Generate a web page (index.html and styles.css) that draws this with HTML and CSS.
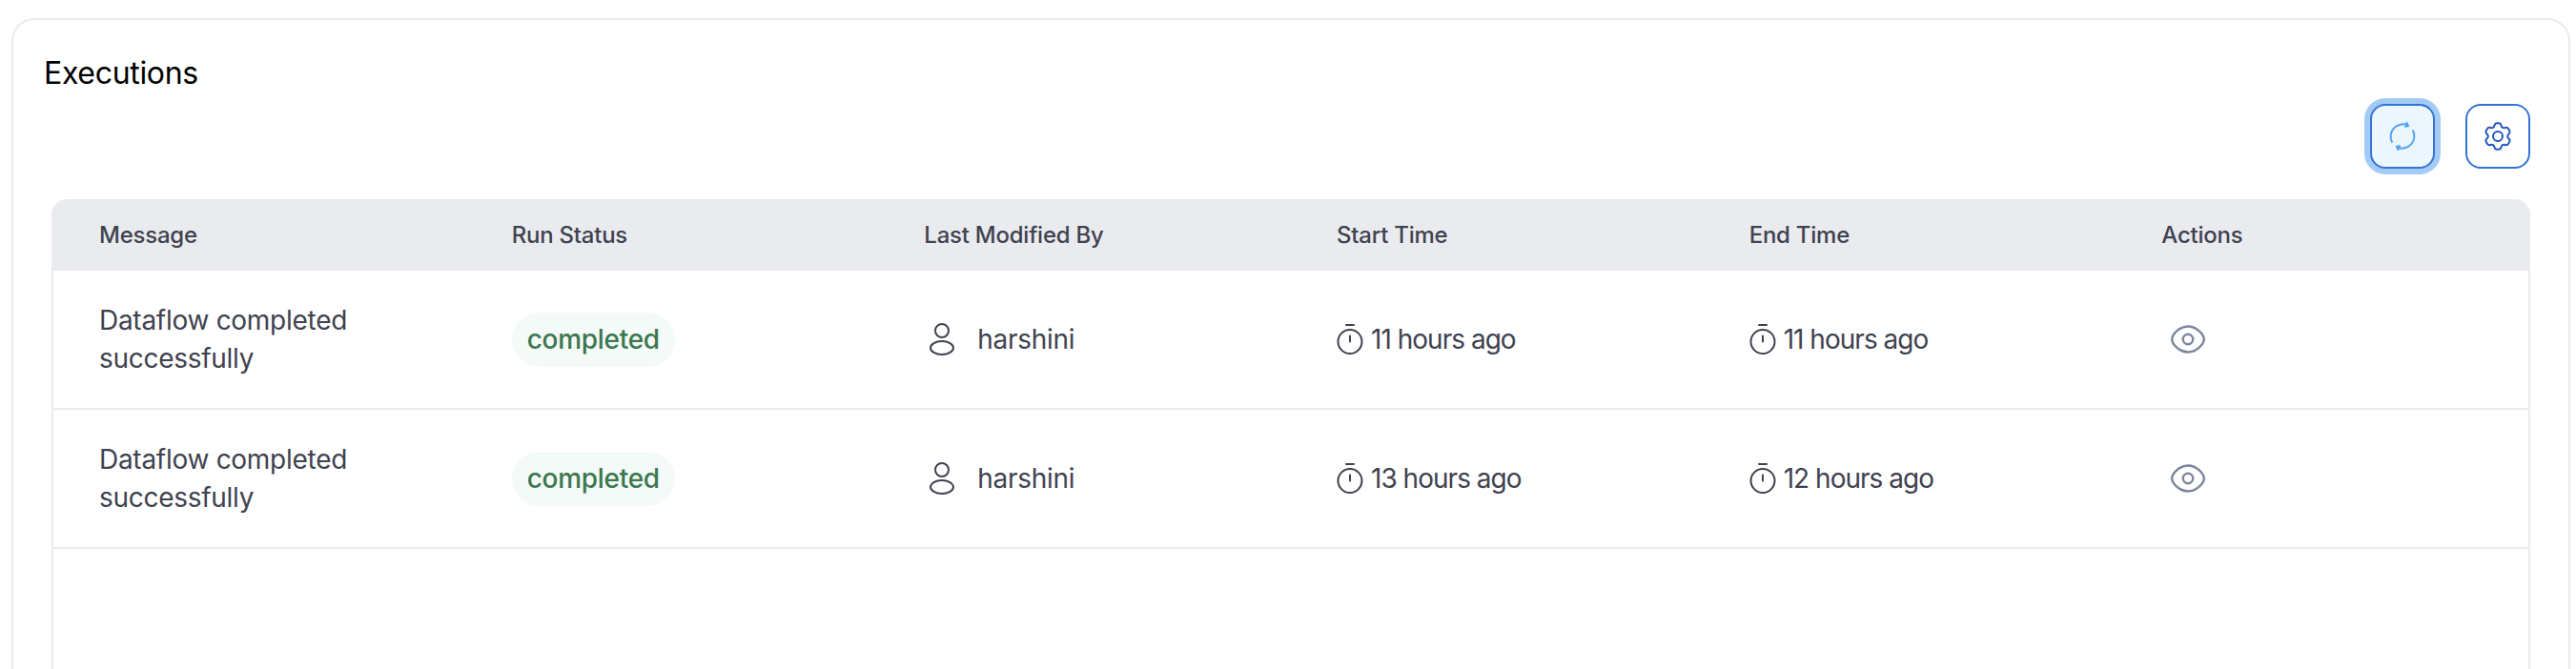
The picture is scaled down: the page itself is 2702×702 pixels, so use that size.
FILE: index.html
```html
<!DOCTYPE html>
<html lang="en">
<head>
<meta charset="utf-8">
<title>Executions</title>
<link rel="stylesheet" href="styles.css">
</head>
<body>
<svg class="sprite" aria-hidden="true">
  <symbol id="user" viewBox="0 0 28 36"><circle cx="14" cy="9" r="7"/><ellipse cx="14" cy="27" rx="12" ry="7"/></symbol>
  <symbol id="timer" viewBox="0 0 28 34"><circle cx="14" cy="19.5" r="12.5"/><path d="M10 2h8M14 13.5v6" stroke-linecap="round"/></symbol>
  <symbol id="eye" viewBox="0 0 36 30"><path d="M1.2 15C1.2 10 9 1.5 18 1.500S34.800 10 34.800 15 27 28.500 18 28.500 1.200 20 1.200 15Z"/><circle cx="18" cy="15" r="5.200"/></symbol>
</svg>
<main class="card">
  <h1 class="title">Executions</h1>
  <div class="toolbar">
    <button class="btn btn-active" aria-label="Refresh">
      <svg class="icon-btn" viewBox="0 0 32 32"><path d="M5.300 22.600A12.800 12.800 0 0 1 21.600 4.500M20.200 1.200L22 5L18.200 6.100M26.700 9.400A12.800 12.800 0 0 1 10.400 27.500M11.800 30.800L10 27L13.800 25.900"/></svg>
    </button>
    <button class="btn" aria-label="Settings">
      <svg class="icon-btn" viewBox="0 0 32 32"><circle cx="16" cy="16" r="5"/><path d="M12.500 4.500Q13 2.300 15 2.300H17Q19 2.300 19.500 4.500C20 7 21.400 7.800 23.800 7Q26 6.300 27 8L28.300 10.200Q29.200 12 27.600 13.400C25.700 15.100 25.700 16.900 27.600 18.600Q29.200 20 28.300 21.800L27 24Q26 25.700 23.800 25C21.400 24.200 20 25 19.500 27.500Q19 29.700 17 29.700H15Q13 29.700 12.500 27.500C12 25 10.600 24.200 8.200 25Q6 25.700 5 24L3.700 21.800Q2.800 20 4.400 18.600C6.300 16.900 6.300 15.100 4.400 13.400Q2.800 12 3.700 10.200L5 8Q6 6.300 8.200 7C10.600 7.800 12 7 12.500 4.500Z"/></svg>
    </button>
  </div>
  <section class="table">
    <div class="row head">
      <div>Message</div><div>Run Status</div><div>Last Modified By</div><div>Start Time</div><div>End Time</div><div>Actions</div>
    </div>
    <div class="row">
      <div>Dataflow completed<br>successfully</div>
      <div><span class="badge">completed</span></div>
      <div class="user"><svg class="icon-user"><use href="#user"/></svg>harshini</div>
      <div class="time"><svg class="icon-timer"><use href="#timer"/></svg>11 hours ago</div>
      <div class="time"><svg class="icon-timer"><use href="#timer"/></svg>11 hours ago</div>
      <div class="actions"><svg class="icon-eye"><use href="#eye"/></svg></div>
    </div>
    <div class="row">
      <div>Dataflow completed<br>successfully</div>
      <div><span class="badge">completed</span></div>
      <div class="user"><svg class="icon-user"><use href="#user"/></svg>harshini</div>
      <div class="time"><svg class="icon-timer"><use href="#timer"/></svg>13 hours ago</div>
      <div class="time"><svg class="icon-timer"><use href="#timer"/></svg>12 hours ago</div>
      <div class="actions"><svg class="icon-eye"><use href="#eye"/></svg></div>
    </div>
  </section>
</main>
</body>
</html>
```
FILE: styles.css
```css
* { box-sizing: border-box; }
body {
  margin: 0;
  height: 702px;
  padding: 19px 6px 0 12px;
  background: #fff;
  color: #3f424f;
  font-family: Inter, "Liberation Sans", sans-serif;
  font-size: 28px;
  line-height: 40px;
}
.sprite { display: none; }
svg { display: block; flex: none; fill: none; stroke: currentColor; stroke-width: 2; }
.card {
  display: flex;
  flex-direction: column;
  height: 100%;
  padding: 36px 40px 0;
  border: 2px solid #eaebef;
  border-bottom: 0;
  border-radius: 24px 24px 0 0;
}
.title {
  margin: 0 0 12px -8px;
  color: #000;
  font-size: 32px;
  font-weight: 400;
  line-height: 40px;
  letter-spacing: -0.01em;
}
.toolbar { display: flex; justify-content: flex-end; gap: 32px; margin-bottom: 32px; }
.btn {
  display: grid;
  place-items: center;
  width: 68px;
  height: 68px;
  padding: 0;
  border: 2px solid #3574d4;
  border-radius: 16px;
  background: #fff;
  color: #2457bd;
}
.btn-active {
  background: #ebf6fd;
  color: #53a3f2;
  box-shadow: 0 0 0 6px #a4cbf5;
}
.icon-btn { width: 32px; height: 32px; }
.table {
  flex: 1;
  border: 2px solid #eaebef;
  border-width: 0 2px;
  border-radius: 16px 16px 0 0;
  overflow: hidden;
}
.row {
  display: grid;
  grid-template-columns: repeat(6, 1fr);
  align-items: center;
  height: 146px;
  border-bottom: 2px solid #eaebef;
  letter-spacing: -0.01em;
}
.row > div { padding-left: 48px; white-space: nowrap; }
.head {
  height: 75px;
  border: 0;
  background: #eaebef;
  font-size: 24px;
  font-weight: 500;
}
.badge {
  display: block;
  width: max-content;
  height: 57px;
  padding: 0 16px;
  border-radius: 29px;
  background: #f4faf7;
  color: #3b774f;
  font-weight: 500;
  line-height: 56px;
}
.user, .time { display: flex; align-items: center; }
.user { gap: 23px; }
.row > .user { padding-left: 53px; }
.row > .time { gap: 8px; letter-spacing: -0.035em; }
.icon-user { width: 28px; height: 36px; }
.icon-timer { width: 28px; height: 34px; }
.row > .actions { padding-left: 58px; }
.icon-eye { width: 36px; height: 30px; color: #7c859b; stroke-width: 2.4; }
```
